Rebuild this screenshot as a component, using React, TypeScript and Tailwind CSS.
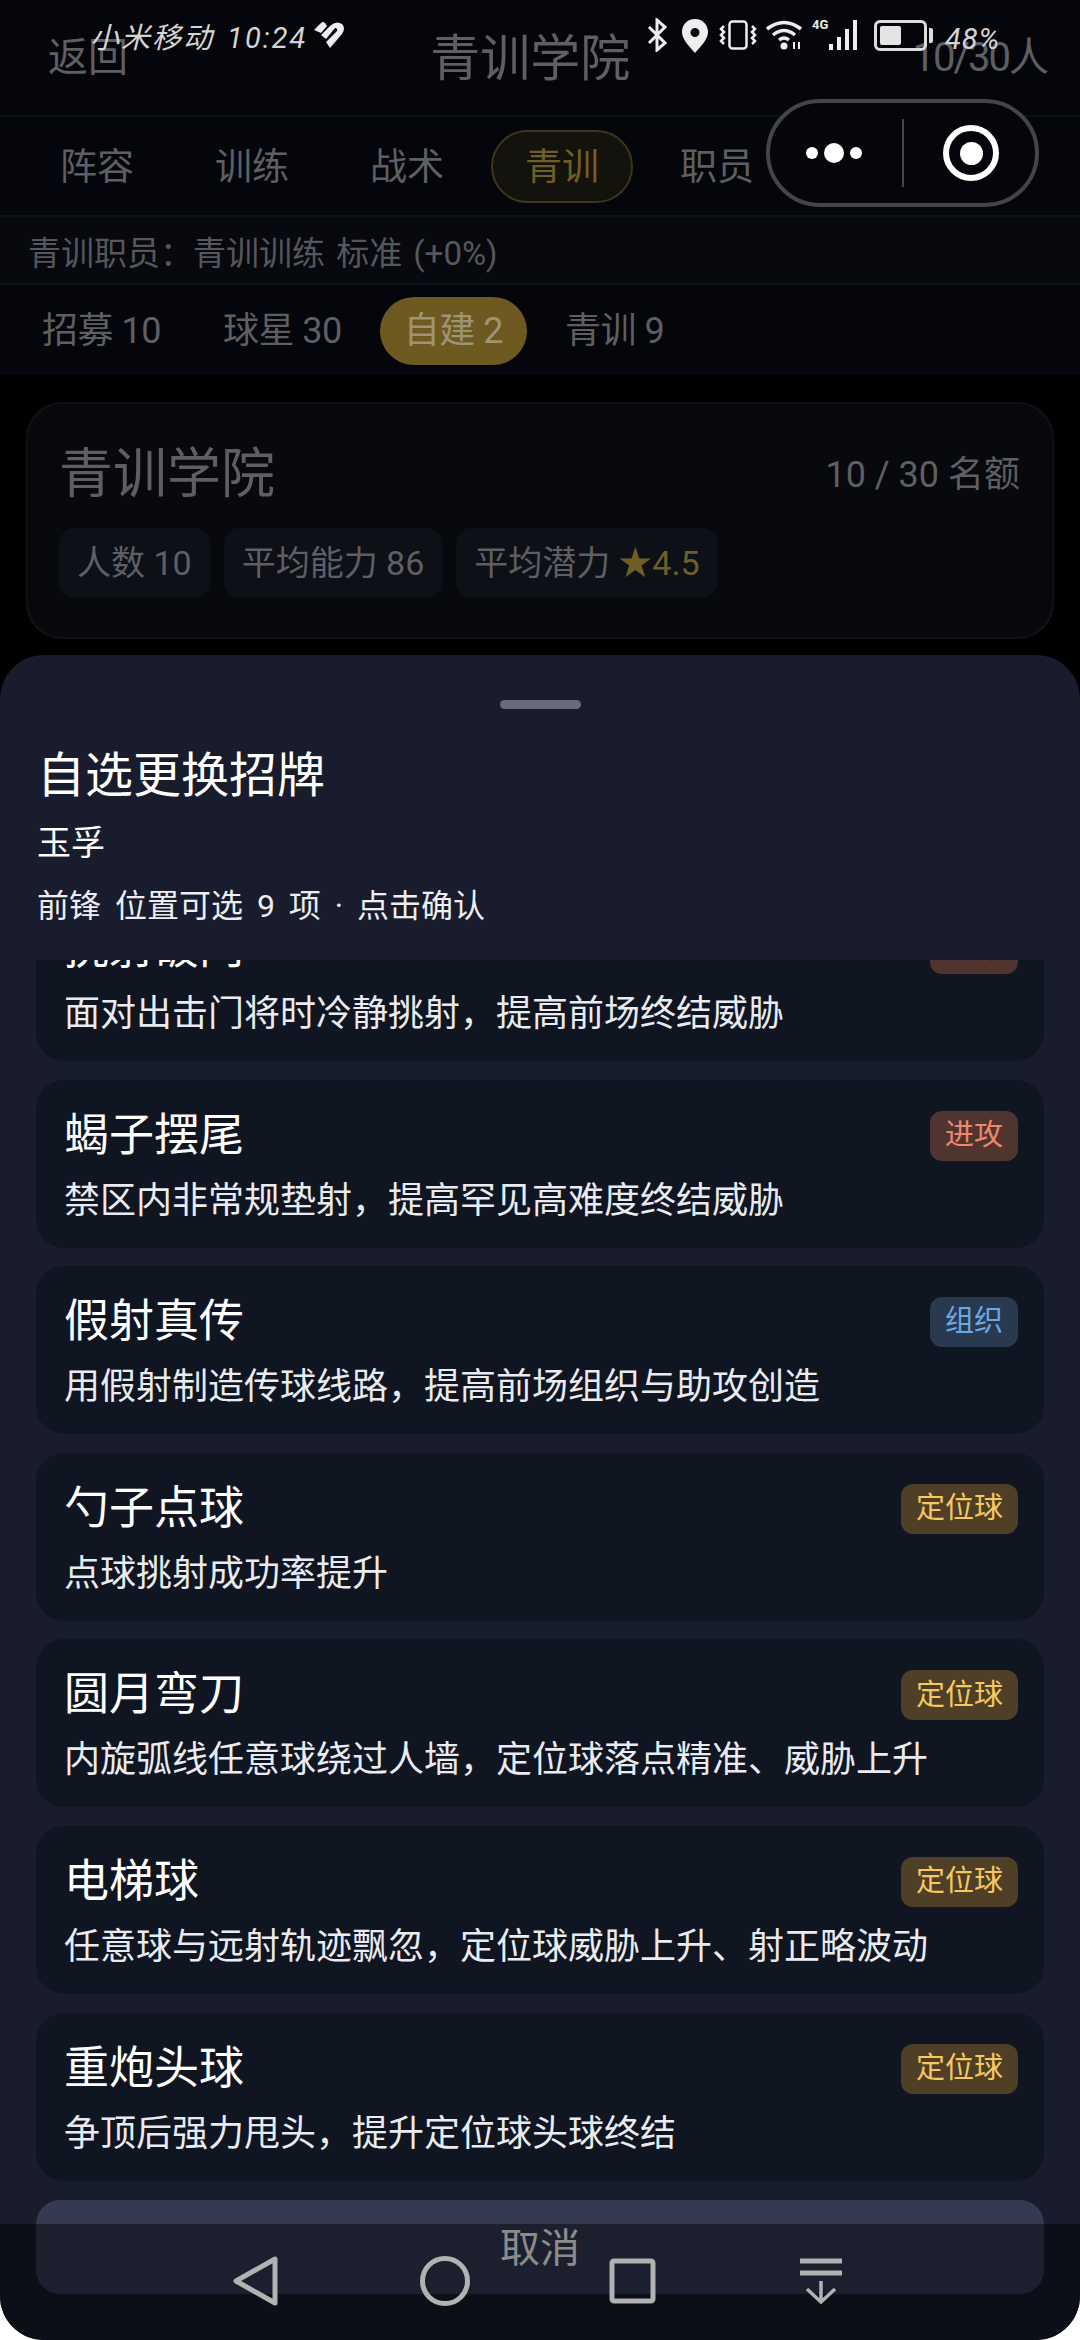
import React from 'react';

const mainTabs = ['阵容', '训练', '战术', '青训', '职员'];
const subTabs = ['招募 10', '球星 30', '自建 2', '青训 9'];

const badgeStyles: Record<string, string> = {
  进攻: 'bg-[#50342f] text-[#f0876c]',
  组织: 'bg-[#293a50] text-[#69a9e6]',
  定位球: 'bg-[#4f3f27] text-[#f5c95f]',
};

const skills = [
  { name: '挑射破门', tag: '进攻', desc: '面对出击门将时冷静挑射，提高前场终结威胁' },
  { name: '蝎子摆尾', tag: '进攻', desc: '禁区内非常规垫射，提高罕见高难度终结威胁' },
  { name: '假射真传', tag: '组织', desc: '用假射制造传球线路，提高前场组织与助攻创造' },
  { name: '勺子点球', tag: '定位球', desc: '点球挑射成功率提升' },
  { name: '圆月弯刀', tag: '定位球', desc: '内旋弧线任意球绕过人墙，定位球落点精准、威胁上升' },
  { name: '电梯球', tag: '定位球', desc: '任意球与远射轨迹飘忽，定位球威胁上升、射正略波动' },
  { name: '重炮头球', tag: '定位球', desc: '争顶后强力甩头，提升定位球头球终结' },
];

const StatusBar = () => (
  <div className="absolute top-0 left-0 w-[1080px] h-[60px] text-white">
    <span className="absolute left-[90px] top-[20px] text-[29px] leading-[36px] italic tracking-[2px] [word-spacing:4px] text-[#d4d4d4] whitespace-nowrap">小米移动 10:24</span>
    <svg className="absolute left-[313px] top-[21px]" width="32" height="28" viewBox="0 0 32 28" fill="none">
      <path d="M1 9 L8 2 Q10 0 12 2 L14 5 L8 12 Z" fill="#eee" />
      <path d="M8 14 L17 5 Q23 -1 29 3 Q33 7 29 13 L17 27 L13 21 L24 10 Q25 7 22 7 L13 18 Z" fill="#eee" />
    </svg>
    <svg className="absolute left-[647px] top-[18px]" width="22" height="34" viewBox="0 0 22 34" fill="none" stroke="#eee" strokeWidth="3">
      <path d="M2 9 L18 25 L10 32 L10 2 L18 9 L2 25" />
    </svg>
    <svg className="absolute left-[682px] top-[19px]" width="26" height="34" viewBox="0 0 26 34">
      <path fillRule="evenodd" fill="#eee" d="M13 0 C5 0 0 6 0 13 C0 21 8 28 13 34 C18 28 26 21 26 13 C26 6 21 0 13 0 Z M13 9 A4.5 4.5 0 1 1 13 18 A4.5 4.5 0 1 1 13 9 Z" />
    </svg>
    <svg className="absolute left-[719px] top-[20px]" width="38" height="30" viewBox="0 0 38 30" fill="none" stroke="#eee" strokeWidth="2.5">
      <rect x="10.5" y="1.5" width="17" height="27" rx="3" />
      <path d="M5 6 L2 9 L5 12 L2 15 L5 18 L2 21 L5 24" />
      <path d="M33 6 L36 9 L33 12 L36 15 L33 18 L36 21 L33 24" />
    </svg>
    <svg className="absolute left-[766px] top-[20px]" width="38" height="30" viewBox="0 0 38 30" fill="none" stroke="#eee" strokeWidth="3.5">
      <path d="M1 9 Q18 -4 35 9" />
      <path d="M7 15 Q18 6 29 15" />
      <circle cx="18" cy="26" r="3.5" fill="#eee" stroke="none" />
      <path d="M13 20 Q18 16 23 20" />
      <path d="M28 22 L28 29 M33 22 L33 29" strokeWidth="2" />
    </svg>
    <span className="absolute left-[812px] top-[17px] text-[13px] leading-[16px] font-bold text-[#eee]">4G</span>
    <div className="absolute left-[829px] top-[20px] flex items-end gap-[4px] h-[30px]">
      <span className="w-[4px] h-[6px] bg-[#eee]" />
      <span className="w-[4px] h-[13px] bg-[#eee]" />
      <span className="w-[4px] h-[21px] bg-[#eee]" />
      <span className="w-[4px] h-[30px] bg-[#eee]" />
    </div>
    <div className="absolute left-[874px] top-[20px] w-[53px] h-[31px] rounded-[6px] border-[3px] border-[#ddd] p-[3px]">
      <div className="w-[21px] h-full bg-[#e4e4e4] rounded-[2px]" />
    </div>
    <span className="absolute left-[929px] top-[28px] w-[4px] h-[15px] bg-[#ddd] rounded-r-[2px]" />
    <span className="absolute left-[945px] top-[23px] text-[29px] leading-[32px] italic tracking-[1px] text-[#d4d4d4]">48%</span>
  </div>
);

const Capsule = () => (
  <div className="absolute left-[766px] top-[99px] w-[273px] h-[108px] rounded-full border-[4px] border-[#444548] bg-[#05060b] flex items-center">
    <div className="w-[128px] mr-[4px] flex items-center justify-center gap-[6px]">
      <span className="w-[12px] h-[12px] rounded-full bg-white" />
      <span className="w-[20px] h-[20px] rounded-full bg-white" />
      <span className="w-[12px] h-[12px] rounded-full bg-white" />
    </div>
    <span className="w-[2px] h-[68px] bg-[#444548]" />
    <div className="flex-1 pl-[3px] flex items-center justify-center">
      <div className="w-[56px] h-[56px] rounded-full border-[6px] border-white flex items-center justify-center">
        <span className="w-[23px] h-[23px] rounded-full bg-white" />
      </div>
    </div>
  </div>
);

const NavBar = () => (
  <div className="absolute left-0 bottom-0 w-[1080px] h-[116px] bg-[#000000]/45">
    <div className="relative w-full h-full">
      <svg className="absolute left-[233px] top-[32px]" width="46" height="50" viewBox="0 0 46 50" fill="none" stroke="#b2b2b2" strokeWidth="5" strokeLinejoin="round">
        <path d="M42 3 L42 47 L3 25 Z" />
      </svg>
      <svg className="absolute left-[420px] top-[32px]" width="50" height="50" viewBox="0 0 50 50" fill="none" stroke="#b2b2b2" strokeWidth="5">
        <circle cx="25" cy="25" r="22.5" />
      </svg>
      <svg className="absolute left-[609px] top-[34px]" width="47" height="46" viewBox="0 0 47 46" fill="none" stroke="#b2b2b2" strokeWidth="5" strokeLinejoin="round">
        <rect x="3" y="3" width="41" height="40" rx="2" />
      </svg>
      <svg className="absolute left-[800px] top-[34px]" width="42" height="46" viewBox="0 0 42 46" fill="none" stroke="#b2b2b2" strokeWidth="4.5">
        <path d="M0 3 H42 M0 15 H42" strokeWidth="5" />
        <path d="M21 23 V44 M7 31 L21 44 L35 31" strokeWidth="3.5" />
      </svg>
    </div>
  </div>
);

export default function App() {
  return (
    <div className="relative w-[1080px] h-[2340px] overflow-hidden bg-black rounded-b-[44px] font-['Roboto','Noto_Sans_CJK_SC',sans-serif]">
      {/* dimmed page behind the sheet */}
      <div className="bg-[#05060b] text-[#5e5f63]">
        <div className="h-[115px] pl-[48px] pr-[33px] pt-[29px] flex items-start justify-between">
          <span className="text-[40px] leading-[58px]">返回</span>
          <span className="ml-[20px] text-[50px] leading-[60px]">青训学院</span>
          <span className="text-[40px] leading-[58px] tracking-[-2px]">10/30人</span>
        </div>
        <div className="h-[100px] border-t-2 border-[#0e1017] px-[26px] flex items-center gap-[13px]">
          {mainTabs.map((t) => (
            <span
              key={t}
              className={`h-[73px] w-[142px] pt-[3px] rounded-full flex items-center justify-center text-[37px] border-2 ${t === '青训' ? 'border-[#3d351c] bg-[#13120d] text-[#6f5f26]' : 'border-transparent'}`}
            >
              {t}
            </span>
          ))}
        </div>
        <div className="h-[70px] border-y-2 border-[#0e1017] bg-[#07090e] px-[28px] pt-[7px] flex items-center text-[33px] [word-spacing:3px] text-[#55575c]">
          青训职员：青训训练 标准 (+0%)
        </div>
        <div className="h-[90px] pl-[18px] pt-[2px] flex items-center gap-[14px]">
          {subTabs.map((t) => (
            <span
              key={t}
              className={`h-[68px] px-[24px] rounded-full flex items-center text-[36px] tracking-[-0.5px] whitespace-nowrap ${t === '自建 2' ? 'bg-[#6e5a20] text-[#9d9375]' : ''}`}
            >
              {t}
            </span>
          ))}
        </div>
      </div>

      <div className="mt-[27px] mx-[26px] h-[237px] rounded-[36px] border-2 border-[#101218] bg-[#08090d] pl-[31px] pr-[32px] pt-[33px] text-[#5e5f63]">
        <div className="flex items-center justify-between">
          <span className="text-[54px] leading-[76px]">青训学院</span>
          <span className="text-[36px] leading-[76px]">10 / 30 名额</span>
        </div>
        <div className="mt-[15px] flex gap-[14px] text-[34px]">
          <span className="h-[70px] px-[18px] rounded-[16px] bg-[#0d1017] flex items-center">人数 10</span>
          <span className="h-[70px] px-[18px] rounded-[16px] bg-[#0d1017] flex items-center">平均能力 86</span>
          <span className="h-[70px] px-[18px] rounded-[16px] bg-[#0d1017] flex items-center">
            平均潜力 <span className="ml-[8px] text-[#6f5f26]">★4.5</span>
          </span>
        </div>
      </div>

      {/* bottom sheet */}
      <div className="absolute left-0 right-0 top-[655px] bottom-0 bg-[#181c2c] rounded-t-[44px] text-white">
        <div className="mx-auto mt-[45px] w-[81px] h-[9px] rounded-full bg-[#686c7e]" />
        <div className="px-[37px] h-[251px] pt-[33px]">
          <div className="text-[48px] leading-[68px]">自选更换招牌</div>
          <div className="mt-[8px] text-[34px] leading-[50px]">玉孚</div>
          <div className="mt-[14px] text-[32px] leading-[48px] [word-spacing:6px] text-[#eceef2]">前锋 位置可选 9 项 · 点击确认</div>
        </div>

        <div className="mx-[36px] h-[1223px] overflow-hidden">
          <div className="-mt-[67px] flex flex-col gap-[18.6px]">
            {skills.map((s) => (
              <div key={s.name} className="h-[168px] shrink-0 rounded-[28px] bg-[#101522] pl-[28px] pr-[26px] pt-[28px]">
                <div className="flex items-start justify-between">
                  <span className="text-[45px] leading-[56px]">{s.name}</span>
                  <span className={`mt-[3px] h-[50px] px-[15px] rounded-[12px] flex items-center text-[29px] ${badgeStyles[s.tag]}`}>{s.tag}</span>
                </div>
                <div className="mt-[12px] text-[36px] leading-[50px] text-[#e9ebf0] whitespace-nowrap">{s.desc}</div>
              </div>
            ))}
          </div>
        </div>

        <div className="mx-[36px] mt-[17px] h-[94px] pt-[4px] rounded-[24px] bg-[#333a52] flex items-center justify-center text-[40px] text-white">
          取消
        </div>
      </div>

      <NavBar />
      <StatusBar />
      <Capsule />
    </div>
  );
}
